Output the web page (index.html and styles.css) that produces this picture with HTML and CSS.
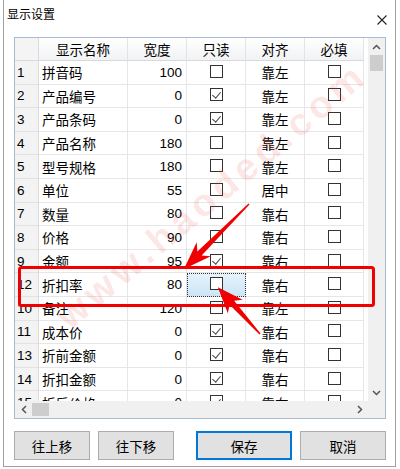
FILE: index.html
```html
<!DOCTYPE html>
<html lang="zh-CN">
<head>
<meta charset="utf-8">
<title>显示设置</title>
<link rel="stylesheet" href="styles.css">
</head>
<body>
<div class="win">
  <div class="titlebar">
    <div class="title">显示设置</div>
    <svg class="close" width="10" height="10" viewBox="0 0 10 10"><path d="M0.5 0.5 L9.5 9.5 M9.5 0.5 L0.5 9.5" stroke="#222" stroke-width="1.1" fill="none"/></svg>
  </div>
  <div class="grid">
    <div class="thead">
      <div class="hc corner"></div>
      <div class="hc">显示名称</div>
      <div class="hc">宽度</div>
      <div class="hc">只读</div>
      <div class="hc">对齐</div>
      <div class="hc">必填</div>
    </div>
    <div class="gap"></div>
    <div class="vscroll">
      <div class="sbtn"><svg width="9" height="6" viewBox="0 0 9 6"><path d="M1 5 L4.5 1.5 L8 5" stroke="#555" stroke-width="1.5" fill="none"/></svg></div>
      <div class="vthumb"></div>
      <div class="vtrack"></div>
      <div class="sbtn"><svg width="9" height="6" viewBox="0 0 9 6"><path d="M1 1 L4.5 4.5 L8 1" stroke="#555" stroke-width="1.5" fill="none"/></svg></div>
    </div>
    <div class="tbody">
      <div class="row"><div class="rh">1</div><div class="c name">拼音码</div><div class="c num">100</div><div class="c chk"><span class="cb"></span></div><div class="c al">靠左</div><div class="c chk"><span class="cb"></span></div></div>
      <div class="row"><div class="rh">2</div><div class="c name">产品编号</div><div class="c num">0</div><div class="c chk"><span class="cb on"></span></div><div class="c al">靠左</div><div class="c chk"><span class="cb"></span></div></div>
      <div class="row"><div class="rh">3</div><div class="c name">产品条码</div><div class="c num">0</div><div class="c chk"><span class="cb on"></span></div><div class="c al">靠左</div><div class="c chk"><span class="cb"></span></div></div>
      <div class="row"><div class="rh">4</div><div class="c name">产品名称</div><div class="c num">180</div><div class="c chk"><span class="cb"></span></div><div class="c al">靠左</div><div class="c chk"><span class="cb"></span></div></div>
      <div class="row"><div class="rh">5</div><div class="c name">型号规格</div><div class="c num">180</div><div class="c chk"><span class="cb"></span></div><div class="c al">靠左</div><div class="c chk"><span class="cb"></span></div></div>
      <div class="row"><div class="rh">6</div><div class="c name">单位</div><div class="c num">55</div><div class="c chk"><span class="cb"></span></div><div class="c al">居中</div><div class="c chk"><span class="cb"></span></div></div>
      <div class="row"><div class="rh">7</div><div class="c name">数量</div><div class="c num">80</div><div class="c chk"><span class="cb"></span></div><div class="c al">靠右</div><div class="c chk"><span class="cb"></span></div></div>
      <div class="row"><div class="rh">8</div><div class="c name">价格</div><div class="c num">90</div><div class="c chk"><span class="cb"></span></div><div class="c al">靠右</div><div class="c chk"><span class="cb"></span></div></div>
      <div class="row"><div class="rh">9</div><div class="c name">金额</div><div class="c num">95</div><div class="c chk"><span class="cb on"></span></div><div class="c al">靠右</div><div class="c chk"><span class="cb"></span></div></div>
      <div class="row"><div class="rh">12</div><div class="c name">折扣率</div><div class="c num">80</div><div class="c chk sel"><span class="cb"></span></div><div class="c al">靠右</div><div class="c chk"><span class="cb"></span></div></div>
      <div class="row"><div class="rh">10</div><div class="c name">备注</div><div class="c num">120</div><div class="c chk"><span class="cb"></span></div><div class="c al">靠左</div><div class="c chk"><span class="cb"></span></div></div>
      <div class="row"><div class="rh">11</div><div class="c name">成本价</div><div class="c num">0</div><div class="c chk"><span class="cb on"></span></div><div class="c al">靠右</div><div class="c chk"><span class="cb"></span></div></div>
      <div class="row"><div class="rh">13</div><div class="c name">折前金额</div><div class="c num">0</div><div class="c chk"><span class="cb on"></span></div><div class="c al">靠右</div><div class="c chk"><span class="cb"></span></div></div>
      <div class="row"><div class="rh">14</div><div class="c name">折扣金额</div><div class="c num">0</div><div class="c chk"><span class="cb on"></span></div><div class="c al">靠右</div><div class="c chk"><span class="cb"></span></div></div>
      <div class="row"><div class="rh">15</div><div class="c name">折后价格</div><div class="c num">0</div><div class="c chk"><span class="cb on"></span></div><div class="c al">靠右</div><div class="c chk"><span class="cb"></span></div></div>
    </div>
    <div class="hscroll">
      <div class="sbtn h"><svg width="6" height="9" viewBox="0 0 6 9"><path d="M5 1 L1.5 4.5 L5 8" stroke="#555" stroke-width="1.5" fill="none"/></svg></div>
      <div class="hthumb"></div>
      <div class="htrack"></div>
      <div class="sbtn h"><svg width="6" height="9" viewBox="0 0 6 9"><path d="M1 1 L4.5 4.5 L1 8" stroke="#555" stroke-width="1.5" fill="none"/></svg></div>
    </div>
    <div class="scorner"></div>
  </div>
  <div class="buttons">
    <button class="btn b1">往上移</button>
    <button class="btn b2">往下移</button>
    <button class="btn b3 focus">保存</button>
    <button class="btn b4">取消</button>
  </div>
</div>
<div class="watermark">www.haoded.com</div>
<svg class="annot" width="400" height="469" viewBox="0 0 400 469">
  <rect x="19.5" y="267.5" width="354" height="38" rx="2" fill="none" stroke="#f00000" stroke-width="3"/>
  <g transform="translate(249 204) rotate(135)"><polygon points="0,-0.7 70,-3 64,-10 92,0 64,10 70,3 0,0.7" fill="#f00000"/></g>
  <g transform="translate(260 334) rotate(228)"><polygon points="0,-0.7 42,-3 37,-10 63,0 37,10 42,3 0,0.7" fill="#f00000"/></g>
</svg>
</body>
</html>
```

FILE: styles.css
```css
* { box-sizing: border-box; }
html, body { margin: 0; padding: 0; }
body {
  width: 400px;
  height: 469px;
  overflow: hidden;
  background: #ffffff;
  position: relative;
  font-family: "Liberation Sans", "Noto Sans CJK SC", sans-serif;
  color: #000;
}
.win {
  margin-left: 3px;
  width: 393px;
  height: 467px;
  border: 1px solid #a0a0a0;
  border-top: none;
  background: #fff;
  display: flex;
  flex-direction: column;
}
.titlebar {
  height: 37px;
  display: flex;
  align-items: flex-start;
  padding: 6px 0 0 3px;
}
.title {
  flex: 1;
  font-size: 12px;
  line-height: 16px;
  font-family: "Noto Sans CJK SC", sans-serif;
}
.close { margin: 9px 8px 0 0; }
.grid {
  margin: 0 9px 0 10px;
  height: 382px;
  border: 1px solid #a7bcd4;
  display: grid;
  grid-template-columns: 349px 4px 17px;
  grid-template-rows: 23px 340px 17px;
  background: #fff;
}
.thead {
  grid-column: 1;
  grid-row: 1;
  display: grid;
  grid-template-columns: 24px 89px 59px 59px 59px 59px;
}
.hc {
  background: linear-gradient(#ffffff, #f1f2f4);
  border-right: 1px solid #e2e3e6;
  border-bottom: 1px solid #d8d9dc;
  font-size: 13.5px;
  line-height: 22px;
  text-align: center;
  font-family: "Noto Sans CJK SC", sans-serif;
}
.hc.corner { background: #f4f4f4; border-right-color: #dadada; }
.gap { grid-column: 2; grid-row: 1 / 3; background: #fff; }
.vscroll {
  grid-column: 3;
  grid-row: 1 / 3;
  background: #f0f0f0;
  display: flex;
  flex-direction: column;
}
.sbtn {
  width: 17px;
  height: 17px;
  flex: none;
  display: flex;
  align-items: center;
  justify-content: center;
}
.vthumb { height: 16px; margin: 0 2px; background: #cdcdcd; flex: none; }
.vtrack { flex: 1; }
.tbody {
  grid-column: 1;
  grid-row: 2;
  overflow: hidden;
}
.row {
  display: grid;
  grid-template-columns: 24px 89px 59px 59px 59px 59px;
  height: 23.6px;
}
.rh {
  background: #f3f3f3;
  border-right: 1px solid #dadada;
  border-bottom: 1px solid #e2e2e2;
  font-size: 13.5px;
  display: flex;
  align-items: center;
  padding-left: 2px;
}
.c {
  border-right: 1px solid #e6e6e6;
  border-bottom: 1px solid #e6e6e6;
  font-size: 13.5px;
  display: flex;
  align-items: center;
}
.name { padding-left: 3px; font-family: "Noto Sans CJK SC", sans-serif; }
.num { justify-content: flex-end; padding-right: 4px; }
.al { justify-content: center; font-family: "Noto Sans CJK SC", sans-serif; }
.chk { justify-content: center; }
.cb {
  width: 13px;
  height: 13px;
  border: 1px solid #333;
  background: #fff;
  margin-top: -2px;
  position: relative;
}
.cb.on::after {
  content: "";
  position: absolute;
  left: 3px;
  top: 1px;
  width: 4px;
  height: 7px;
  border-right: 1.3px solid #444;
  border-bottom: 1.3px solid #444;
  transform: rotate(40deg);
}
.chk.sel {
  background: linear-gradient(#e6f3fc, #cbe5f6);
  outline: 1px dotted #333;
  outline-offset: -1px;
}
.hscroll {
  grid-column: 1 / 3;
  grid-row: 3;
  background: #f0f0f0;
  display: flex;
}
.hthumb { width: 17px; margin: 2px 0; background: #cdcdcd; flex: none; }
.htrack { flex: 1; }
.scorner { grid-column: 3; grid-row: 3; background: #f0f0f0; }
.buttons {
  display: flex;
  margin-top: 12px;
  padding-left: 10px;
}
.btn {
  height: 29px;
  background: #e1e1e1;
  border: 1px solid #adadad;
  font-family: "Noto Sans CJK SC", sans-serif;
  font-size: 13.5px;
  color: #000;
  padding: 0;
}
.b1 { width: 76px; }
.b2 { width: 76px; margin-left: 8px; }
.b3 { width: 96px; margin-left: 22px; }
.b4 { width: 86px; margin-left: 8px; }
.btn.focus { border: 2px solid #0078d7; }
.watermark {
  position: absolute;
  left: 62px;
  top: 300px;
  font-family: "Liberation Sans", sans-serif;
  font-weight: bold;
  font-size: 38px;
  letter-spacing: 5px;
  color: rgba(235, 60, 60, 0.13);
  transform: rotate(-40deg);
  transform-origin: left center;
  white-space: nowrap;
  pointer-events: none;
}
.annot { position: absolute; left: 0; top: 0; pointer-events: none; }
```
